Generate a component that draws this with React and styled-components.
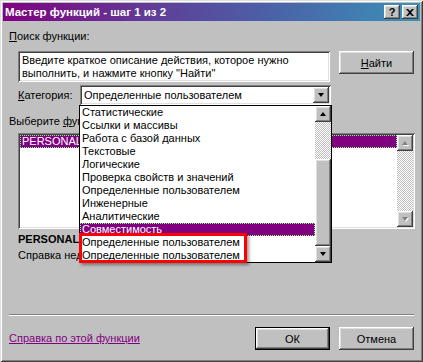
import React from "react";
import styled, { createGlobalStyle } from "styled-components";

const GlobalStyle = createGlobalStyle`
    html, body {
        margin: 0;
        padding: 0;
        background: #c0c0c0;
    }
    body {
        font-family: "Liberation Sans", Arial, sans-serif;
        font-size: 11px;
        color: #000;
    }
`;

const raised = `
    box-shadow: inset -1px -1px #404040, inset 1px 1px #fff,
        inset -2px -2px #808080, inset 2px 2px #dfdfdf;
`;

const sunken = `
    box-shadow: inset 1px 1px #808080, inset -1px -1px #fff,
        inset 2px 2px #404040, inset -2px -2px #dfdfdf;
`;

const checker = `
    background-color: #c0c0c0;
    background-image: conic-gradient(#fff 25%, #c0c0c0 0 50%, #fff 0 75%, #c0c0c0 0);
    background-size: 2px 2px;
`;

const categories = [
    "Статистические",
    "Ссылки и массивы",
    "Работа с базой данных",
    "Текстовые",
    "Логические",
    "Проверка свойств и значений",
    "Определенные пользователем",
    "Инженерные",
    "Аналитические",
    "Совместимость",
    "Определенные пользователем",
    "Определенные пользователем",
];

const App = () => {
    return (
        <>
            <GlobalStyle />
            <Window>
                <TitleBar>
                    <Caption>Мастер функций - шаг 1 из 2</Caption>
                    <TitleButtons>
                        <TitleButton><HelpGlyph>?</HelpGlyph></TitleButton>
                        <TitleButton>
                            <svg width="8" height="7" viewBox="0 0 8 7">
                                <path d="M0 0h2l2 2 2-2h2L5 3.5 8 7H6L4 5 2 7H0l3-3.5z" fill="#000" />
                            </svg>
                        </TitleButton>
                    </TitleButtons>
                </TitleBar>

                <Content>
                    <Label><u>П</u>оиск функции:</Label>
                    <SearchRow>
                        <SearchBox>
                            Введите краткое описание действия, которое нужно
                            выполнить, и нажмите кнопку "Найти"
                        </SearchBox>
                        <Button><u>Н</u>айти</Button>
                    </SearchRow>

                    <CategoryRow>
                        <CategoryLabel><u>К</u>атегория:</CategoryLabel>
                        <Combo>
                            <ComboText>Определенные пользователем</ComboText>
                            <ArrowButton><Arrow $down /></ArrowButton>
                            <DropList>
                                <Items>
                                    {categories.map((c, i) => (
                                        <Item key={i} $selected={i === 9}>{c}</Item>
                                    ))}
                                </Items>
                                <ScrollBar>
                                    <ScrollButton><Arrow /></ScrollButton>
                                    <Track $size="37px" />
                                    <Thumb />
                                    <ScrollButton><Arrow $down /></ScrollButton>
                                </ScrollBar>
                                <Highlight />
                            </DropList>
                        </Combo>
                    </CategoryRow>

                    <Label $top="10px">Выберите <u>ф</u>ункцию:</Label>
                    <ListBox>
                        <Items>
                            <Item $selected>PERSONAL.XLS!Функция1</Item>
                        </Items>
                        <ScrollBar>
                            <ScrollButton><Arrow $disabled /></ScrollButton>
                            <Track />
                            <ScrollButton><Arrow $down $disabled /></ScrollButton>
                        </ScrollBar>
                    </ListBox>

                    <FuncName>PERSONAL.XLS!Функция1()</FuncName>
                    <FuncHelp>Справка недоступна.</FuncHelp>

                    <Separator />
                    <BottomRow>
                        <HelpLink>Справка по этой функции</HelpLink>
                        <Buttons>
                            <Button $default>ОК</Button>
                            <Button>Отмена</Button>
                        </Buttons>
                    </BottomRow>
                </Content>
            </Window>
        </>
    );
};

export default App;

const Window = styled.div`
    width: 423px;
    height: 362px;
    box-sizing: border-box;
    padding: 3px;
    background: #c0c0c0;
    box-shadow: inset 1px 1px #dfdfdf, inset -1px -1px #404040,
        inset 2px 2px #fff, inset -2px -2px #808080;
    display: flex;
    flex-direction: column;
    position: relative;
`;

const TitleBar = styled.div`
    height: 18px;
    display: flex;
    align-items: center;
    justify-content: space-between;
    padding: 0 2px 0 2px;
    background: linear-gradient(to right, #800080 0%, #603c98 35%, #4a62a8 65%, #3a92b8 100%);
`;

const Caption = styled.span`
    color: #fff;
    font-weight: bold;
    font-size: 11.5px;
    white-space: nowrap;
`;

const TitleButtons = styled.div`
    display: flex;
    gap: 2px;
`;

const TitleButton = styled.div`
    width: 16px;
    height: 14px;
    background: #c0c0c0;
    ${raised}
    display: flex;
    align-items: center;
    justify-content: center;
`;

const HelpGlyph = styled.span`
    font-weight: bold;
    font-size: 11px;
    line-height: 11px;
`;

const Content = styled.div`
    flex: 1;
    display: flex;
    flex-direction: column;
    padding: 0 6px 9px 6px;
`;

const Label = styled.div`
    margin-top: ${p => p.$top || "9px"};
    line-height: 13px;
    white-space: nowrap;
`;

const SearchRow = styled.div`
    display: flex;
    align-items: flex-start;
    margin-top: 8px;
    padding-left: 9px;
    gap: 9px;
`;

const SearchBox = styled.div`
    width: 312px;
    height: 31px;
    box-sizing: border-box;
    padding: 3px 4px;
    background: #fff;
    ${sunken}
    line-height: 13px;
`;

const Button = styled.div`
    width: 75px;
    height: 23px;
    box-sizing: border-box;
    display: flex;
    align-items: center;
    justify-content: center;
    background: #c0c0c0;
    ${p => p.$default
        ? `border: 1px solid #000;
           box-shadow: inset -1px -1px #404040, inset 1px 1px #fff,
               inset -2px -2px #808080, inset 2px 2px #dfdfdf;`
        : raised}
`;

const CategoryRow = styled.div`
    display: flex;
    align-items: center;
    margin-top: 3px;
    padding-left: 9px;
`;

const CategoryLabel = styled.div`
    width: 62px;
    line-height: 13px;
`;

const Combo = styled.div`
    position: relative;
    width: 251px;
    height: 20px;
    box-sizing: border-box;
    background: #fff;
    ${sunken}
    display: flex;
    align-items: center;
    justify-content: space-between;
    padding: 2px;
`;

const ComboText = styled.span`
    padding-left: 2px;
    white-space: nowrap;
`;

const ArrowButton = styled.div`
    width: 16px;
    height: 16px;
    box-sizing: border-box;
    background: #c0c0c0;
    ${raised}
    display: flex;
    align-items: center;
    justify-content: center;
`;

const Arrow = styled.div`
    width: 0;
    height: 0;
    border-left: 3.5px solid transparent;
    border-right: 3.5px solid transparent;
    ${p => (p.$down ? "border-top" : "border-bottom")}: 4px solid
        ${p => (p.$disabled ? "#808080" : "#000")};
    ${p => p.$disabled && `filter: drop-shadow(1px 1px 0 #fff);`}
`;

const DropList = styled.div`
    position: absolute;
    top: 100%;
    left: -1px;
    width: 253px;
    box-sizing: border-box;
    border: 1px solid #000;
    background: #fff;
    display: flex;
    z-index: 2;
`;

const Items = styled.div`
    flex: 1;
    min-width: 0;
`;

const Item = styled.div`
    height: 13px;
    line-height: 13px;
    box-sizing: border-box;
    padding-left: 2px;
    white-space: nowrap;
    overflow: hidden;
    background: ${p => (p.$selected ? "#800080" : "transparent")};
    color: ${p => (p.$selected ? "#fff" : "#000")};
    ${p => p.$selected && `outline: 1px dotted #7fff7f; outline-offset: -1px;`}
`;

const ScrollBar = styled.div`
    width: 16px;
    display: flex;
    flex-direction: column;
    ${checker}
`;

const ScrollButton = styled.div`
    width: 16px;
    height: 16px;
    flex-shrink: 0;
    box-sizing: border-box;
    background: #c0c0c0;
    ${raised}
    display: flex;
    align-items: center;
    justify-content: center;
`;

const Track = styled.div`
    flex: ${p => (p.$size ? `0 0 ${p.$size}` : "1")};
`;

const Thumb = styled.div`
    flex: 1;
    background: #c0c0c0;
    ${raised}
`;

const Highlight = styled.div`
    position: absolute;
    left: -1px;
    top: 127px;
    width: 168px;
    height: 30px;
    box-sizing: border-box;
    border: 3px solid #ff0000;
    box-shadow: 2px 2px 3px rgba(0, 0, 0, 0.4);
`;

const ListBox = styled.div`
    margin: 5px 0 0 9px;
    width: 397px;
    height: 96px;
    box-sizing: border-box;
    padding: 2px;
    background: #fff;
    ${sunken}
    display: flex;
`;

const FuncName = styled.div`
    margin: 4px 0 0 9px;
    line-height: 13px;
    font-weight: bold;
`;

const FuncHelp = styled.div`
    margin: 3px 0 0 9px;
    line-height: 13px;
`;

const Separator = styled.div`
    margin-top: auto;
    height: 0;
    border-top: 1px solid #808080;
    border-bottom: 1px solid #fff;
`;

const BottomRow = styled.div`
    margin-top: 11px;
    display: flex;
    align-items: center;
    justify-content: space-between;
`;

const HelpLink = styled.span`
    color: #800080;
    text-decoration: underline;
    line-height: 13px;
`;

const Buttons = styled.div`
    display: flex;
    gap: 9px;
`;
